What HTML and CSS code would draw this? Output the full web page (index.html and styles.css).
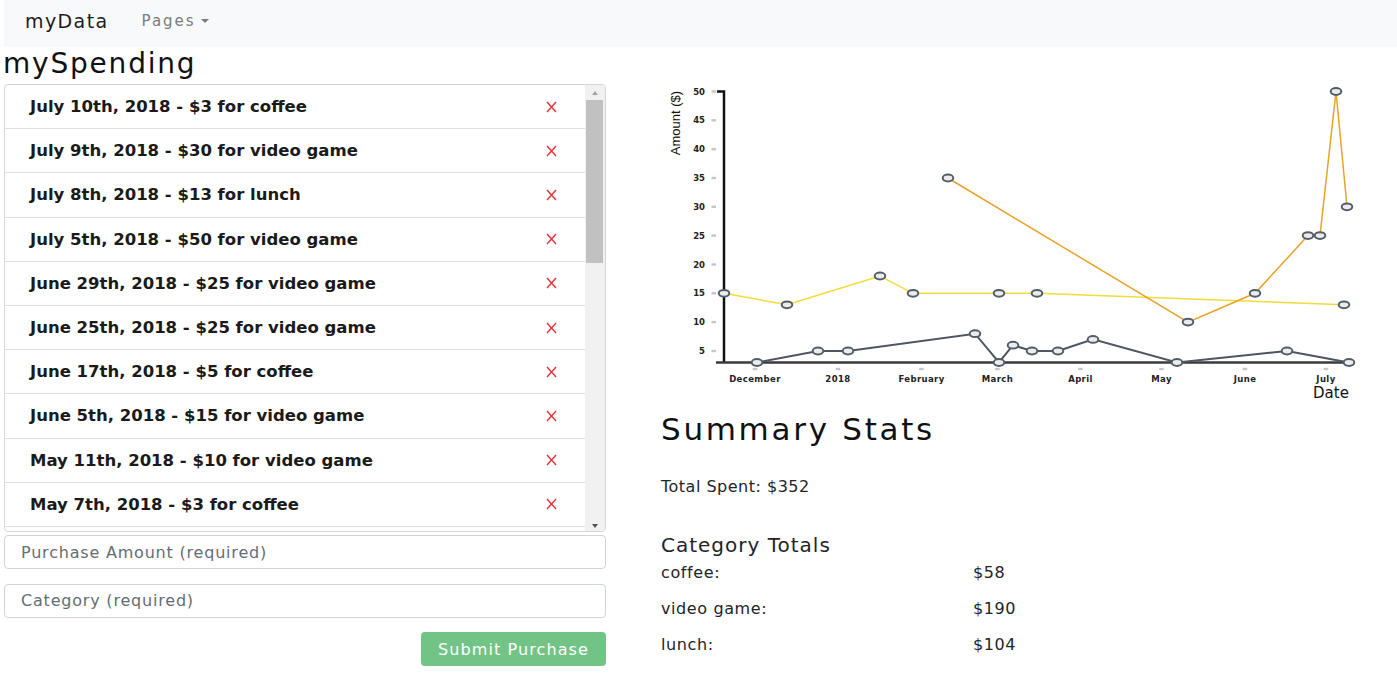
FILE: index.html
```html
<!DOCTYPE html>
<html lang="en">
<head>
<meta charset="utf-8">
<title>myData - mySpending</title>
<link rel="stylesheet" href="styles.css">
</head>
<body>
<nav class="navbar">
  <span class="brand">myData</span>
  <span class="nav-link">Pages<span class="caret"></span></span>
</nav>
<main class="page">
  <h3 class="title">mySpending</h3>
  <div class="layout">
    <section class="left">
      <div class="list-box">
        <ul class="list">
          <li class="item"><span>July 10th, 2018 - $3 for coffee</span><svg class="del" viewBox="0 0 11 12" width="11" height="12"><path d="M1 1L10 11M10 1L1 11"/></svg></li>
          <li class="item"><span>July 9th, 2018 - $30 for video game</span><svg class="del" viewBox="0 0 11 12" width="11" height="12"><path d="M1 1L10 11M10 1L1 11"/></svg></li>
          <li class="item"><span>July 8th, 2018 - $13 for lunch</span><svg class="del" viewBox="0 0 11 12" width="11" height="12"><path d="M1 1L10 11M10 1L1 11"/></svg></li>
          <li class="item"><span>July 5th, 2018 - $50 for video game</span><svg class="del" viewBox="0 0 11 12" width="11" height="12"><path d="M1 1L10 11M10 1L1 11"/></svg></li>
          <li class="item"><span>June 29th, 2018 - $25 for video game</span><svg class="del" viewBox="0 0 11 12" width="11" height="12"><path d="M1 1L10 11M10 1L1 11"/></svg></li>
          <li class="item"><span>June 25th, 2018 - $25 for video game</span><svg class="del" viewBox="0 0 11 12" width="11" height="12"><path d="M1 1L10 11M10 1L1 11"/></svg></li>
          <li class="item"><span>June 17th, 2018 - $5 for coffee</span><svg class="del" viewBox="0 0 11 12" width="11" height="12"><path d="M1 1L10 11M10 1L1 11"/></svg></li>
          <li class="item"><span>June 5th, 2018 - $15 for video game</span><svg class="del" viewBox="0 0 11 12" width="11" height="12"><path d="M1 1L10 11M10 1L1 11"/></svg></li>
          <li class="item"><span>May 11th, 2018 - $10 for video game</span><svg class="del" viewBox="0 0 11 12" width="11" height="12"><path d="M1 1L10 11M10 1L1 11"/></svg></li>
          <li class="item"><span>May 7th, 2018 - $3 for coffee</span><svg class="del" viewBox="0 0 11 12" width="11" height="12"><path d="M1 1L10 11M10 1L1 11"/></svg></li>
        </ul>
        <div class="scrollbar" aria-hidden="true">
          <div class="sb-up"><i></i></div>
          <div class="sb-thumb"></div>
          <div class="sb-track"></div>
          <div class="sb-down"><i></i></div>
        </div>
      </div>
      <form class="form">
        <input class="field" type="text" placeholder="Purchase Amount (required)">
        <input class="field" type="text" placeholder="Category (required)">
        <div class="actions"><button class="btn" type="button">Submit Purchase</button></div>
      </form>
    </section>
    <section class="right">
      <svg class="chart" viewBox="661 84 736 321" width="736" height="321">
        <g class="ticks-y">
          <rect x="711.5" y="90.3" width="4.5" height="2.4"/><text x="705" y="94.5">50</text>
          <rect x="711.5" y="119.1" width="4.5" height="2.4"/><text x="705" y="123.3">45</text>
          <rect x="711.5" y="148" width="4.5" height="2.4"/><text x="705" y="152.2">40</text>
          <rect x="711.5" y="176.8" width="4.5" height="2.4"/><text x="705" y="181">35</text>
          <rect x="711.5" y="205.6" width="4.5" height="2.4"/><text x="705" y="209.8">30</text>
          <rect x="711.5" y="234.4" width="4.5" height="2.4"/><text x="705" y="238.6">25</text>
          <rect x="711.5" y="263.3" width="4.5" height="2.4"/><text x="705" y="267.5">20</text>
          <rect x="711.5" y="292.1" width="4.5" height="2.4"/><text x="705" y="296.3">15</text>
          <rect x="711.5" y="320.9" width="4.5" height="2.4"/><text x="705" y="325.1">10</text>
          <rect x="711.5" y="349.8" width="4.5" height="2.4"/><text x="705" y="354">5</text>
        </g>
        <g class="ticks-x">
          <rect x="752.7" y="367.8" width="4.5" height="2.4"/><text x="755" y="381.5">December</text>
          <rect x="835.7" y="367.8" width="4.5" height="2.4"/><text x="838" y="381.5">2018</text>
          <rect x="919.2" y="367.8" width="4.5" height="2.4"/><text x="921.5" y="381.5">February</text>
          <rect x="995.2" y="367.8" width="4.5" height="2.4"/><text x="997.5" y="381.5">March</text>
          <rect x="1078.2" y="367.8" width="4.5" height="2.4"/><text x="1080.5" y="381.5">April</text>
          <rect x="1159.2" y="367.8" width="4.5" height="2.4"/><text x="1161.5" y="381.5">May</text>
          <rect x="1242.7" y="367.8" width="4.5" height="2.4"/><text x="1245" y="381.5">June</text>
          <rect x="1323.7" y="367.8" width="4.5" height="2.4"/><text x="1326" y="381.5">July</text>
        </g>
        <path class="axis-y" d="M717 91.5H724V363"/>
        <line class="axis-x" x1="716" y1="362.5" x2="1352" y2="362.5"/>
        <text class="axis-title" x="1331" y="398">Date</text>
        <text class="y-title" transform="translate(680,123) rotate(-90)">Amount ($)</text>
        <path class="line lunch" d="M724 293.3L787 304.8L880 276L913 293.3L999 293.3L1037 293.3L1344 304.8"/>
        <path class="line video" d="M948 178L1188 322.1L1255 293.3L1308 235.6L1320 235.6L1336 91.5L1347 206.8"/>
        <path class="line coffee" d="M757 362.5L818 351L848 351L975 333.7L999 362.5L1013 345.2L1032 351L1058 351L1093 339.4L1177 362.5L1287 351L1349 362.5"/>
        <g class="dots">
          <ellipse cx="724" cy="293.3"/><ellipse cx="787" cy="304.8"/><ellipse cx="880" cy="276"/><ellipse cx="913" cy="293.3"/><ellipse cx="999" cy="293.3"/><ellipse cx="1037" cy="293.3"/><ellipse cx="1344" cy="304.8"/>
          <ellipse cx="948" cy="178"/><ellipse cx="1188" cy="322.1"/><ellipse cx="1255" cy="293.3"/><ellipse cx="1308" cy="235.6"/><ellipse cx="1320" cy="235.6"/><ellipse cx="1336" cy="91.5"/><ellipse cx="1347" cy="206.8"/>
          <ellipse cx="757" cy="362.5"/><ellipse cx="818" cy="351"/><ellipse cx="848" cy="351"/><ellipse cx="975" cy="333.7"/><ellipse cx="999" cy="362.5"/><ellipse cx="1013" cy="345.2"/><ellipse cx="1032" cy="351"/><ellipse cx="1058" cy="351"/><ellipse cx="1093" cy="339.4"/><ellipse cx="1177" cy="362.5"/><ellipse cx="1287" cy="351"/><ellipse cx="1349" cy="362.5"/>
        </g>
      </svg>
      <h2 class="summary-title">Summary Stats</h2>
      <p class="total">Total Spent: $352</p>
      <h5 class="cat-title">Category Totals</h5>
      <div class="cat-grid">
        <span>coffee:</span><span>$58</span>
        <span>video game:</span><span>$190</span>
        <span>lunch:</span><span>$104</span>
      </div>
    </section>
  </div>
</main>
</body>
</html>
```
FILE: styles.css
```css
body {
  margin: 0;
  font-family: "DejaVu Sans", sans-serif;
  color: #212529;
  background: #fff;
}

.navbar {
  margin-left: 4px;
  height: 47px;
  background: #f8f9fa;
  display: flex;
  align-items: flex-start;
  padding-left: 21px;
}

.brand {
  font-size: 19px;
  line-height: 42px;
  letter-spacing: 1.4px;
  color: #1c1c1c;
}

.nav-link {
  margin-left: 33px;
  height: 42px;
  display: inline-flex;
  align-items: center;
  font-size: 15px;
  line-height: 42px;
  letter-spacing: 2px;
  color: #7b7c7d;
}

.caret {
  margin-left: 5px;
  width: 0;
  height: 0;
  border-left: 4.5px solid transparent;
  border-right: 4.5px solid transparent;
  border-top: 4.5px solid #7b7c7d;
}

.page {
  padding-left: 4px;
}

.title {
  margin: 0 0 3px -1px;
  font-size: 28px;
  line-height: 34px;
  font-weight: normal;
  letter-spacing: 1.8px;
  color: #111;
}

.layout {
  display: grid;
  grid-template-columns: 602px 1fr;
  column-gap: 55px;
}

.list-box {
  height: 448px;
  box-sizing: border-box;
  border: 1px solid #d6d6d6;
  border-radius: 4px;
  display: flex;
  overflow: hidden;
}

.list {
  list-style: none;
  margin: 0;
  padding: 0;
  flex: 1;
}

.item {
  display: flex;
  align-items: center;
  justify-content: space-between;
  padding: 12px 28px 12px 25px;
  border-bottom: 1px solid #dfdfdf;
  font-size: 16.5px;
  line-height: 19.2px;
  font-weight: bold;
  color: #1a1a1a;
}

.del {
  display: block;
  fill: none;
  stroke: #e5323b;
  stroke-width: 1.4;
}

.scrollbar {
  width: 20px;
  background: #f1f1f1;
  display: flex;
  flex-direction: column;
}

.sb-up {
  height: 15px;
  display: flex;
  align-items: center;
  justify-content: center;
}

.sb-up i {
  width: 0;
  height: 0;
  border-left: 3.5px solid transparent;
  border-right: 3.5px solid transparent;
  border-bottom: 4px solid #a3a3a3;
}

.sb-thumb {
  height: 163px;
  margin: 0 2px 0 1px;
  background: #c1c1c1;
}

.sb-track {
  flex: 1;
}

.sb-down {
  height: 15px;
  box-sizing: border-box;
  padding-bottom: 3px;
  display: flex;
  align-items: flex-end;
  justify-content: center;
}

.sb-down i {
  width: 0;
  height: 0;
  border-left: 3.5px solid transparent;
  border-right: 3.5px solid transparent;
  border-top: 4px solid #505050;
}

.form {
  margin: 3px 0 0;
  display: flex;
  flex-direction: column;
  gap: 14.5px;
}

.field {
  height: 34px;
  box-sizing: border-box;
  border: 1px solid #ced4da;
  border-radius: 4px;
  padding: 0 16px;
  font-family: "DejaVu Sans", sans-serif;
  font-size: 16px;
  letter-spacing: 0.8px;
  color: #495057;
  background: #fff;
}

.field::placeholder {
  color: #666d74;
  opacity: 1;
}

.actions {
  display: flex;
  justify-content: flex-end;
}

.btn {
  width: 185px;
  height: 34px;
  padding: 0;
  border: 0;
  border-radius: 4px;
  background: #72c486;
  color: #fff;
  font-family: "DejaVu Sans", sans-serif;
  font-size: 16px;
  letter-spacing: 1.1px;
}

.chart {
  display: block;
}

.ticks-y rect,
.ticks-x rect {
  fill: #c6c6c6;
}

.ticks-y text,
.ticks-x text {
  font-family: "DejaVu Sans", sans-serif;
  font-size: 8.5px;
  font-weight: bold;
  fill: #222;
}

.ticks-y text {
  text-anchor: end;
}

.ticks-x text {
  text-anchor: middle;
  letter-spacing: 0.4px;
}

.axis-y {
  fill: none;
  stroke: #111;
  stroke-width: 2.5;
}

.axis-x {
  stroke: #3a3a3a;
  stroke-width: 2.5;
}

.axis-title {
  font-family: "DejaVu Sans", sans-serif;
  font-size: 15px;
  fill: #111;
  text-anchor: middle;
}

.y-title {
  font-family: "Liberation Sans", Arial, sans-serif;
  font-size: 13px;
  fill: #111;
  text-anchor: middle;
}

.line {
  fill: none;
  stroke-width: 1.5;
}

.lunch {
  stroke: #f2dc3a;
}

.video {
  stroke: #e9a22a;
}

.coffee {
  stroke: #4d5661;
  stroke-width: 2;
}

.dots ellipse {
  rx: 5.3px;
  ry: 3.4px;
  fill: #ececec;
  stroke: #535d68;
  stroke-width: 2;
}

.summary-title {
  margin: 4px 0 0;
  font-size: 31px;
  line-height: 40px;
  font-weight: normal;
  letter-spacing: 2.7px;
  color: #111;
}

.total {
  margin: 26px 0 0;
  font-size: 16px;
  line-height: 24px;
  letter-spacing: 0.5px;
}

.cat-title {
  margin: 35.8px 0 0;
  font-size: 20px;
  line-height: 20px;
  font-weight: normal;
  letter-spacing: 1px;
}

.cat-grid {
  display: grid;
  grid-template-columns: 312px auto;
  grid-auto-rows: 36px;
  font-size: 16px;
  line-height: 36px;
  letter-spacing: 0.6px;
}
```
